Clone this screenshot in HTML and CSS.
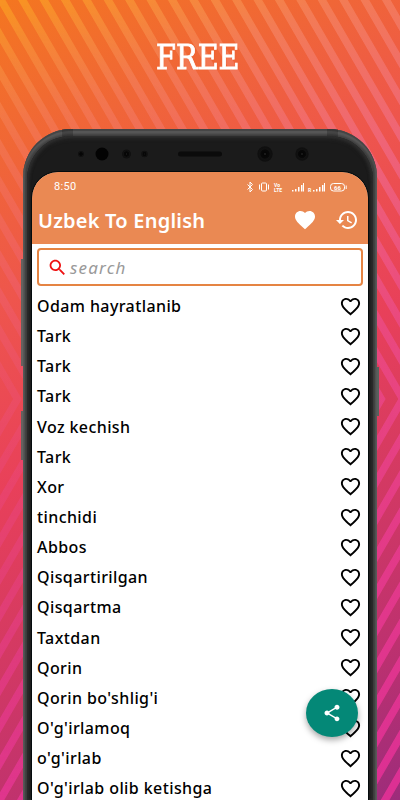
FILE: index.html
```html
<!DOCTYPE html>
<html lang="en">
<head>
  <meta charset="UTF-8">
  <title>Uzbek To English</title>
  <link rel="stylesheet" href="styles.css">
</head>
<body>
  <svg class="backdrop" viewBox="0 0 400 800">
    <defs>
      <linearGradient id="stripe-color" gradientUnits="userSpaceOnUse" x1="30" y1="0" x2="330" y2="800">
        <stop offset="0" stop-color="#f89524"/>
        <stop offset=".13" stop-color="#f37b55"/>
        <stop offset=".3" stop-color="#ef6476"/>
        <stop offset=".5" stop-color="#ea4a80"/>
        <stop offset=".75" stop-color="#e33a88"/>
        <stop offset="1" stop-color="#dc3093"/>
      </linearGradient>
      <radialGradient id="fade" gradientUnits="userSpaceOnUse" cx="0" cy="380" r="420">
        <stop offset="0" stop-opacity=".65"/>
        <stop offset=".5" stop-opacity=".45"/>
        <stop offset="1" stop-opacity="0"/>
      </radialGradient>
      <pattern id="down" width="21.4" height="400" patternUnits="userSpaceOnUse" patternTransform="translate(18.1 0) skewX(30)"><rect width="8.7" height="400" fill="#fff"/></pattern>
      <pattern id="up" width="21.4" height="400" patternUnits="userSpaceOnUse" patternTransform="translate(18.1 798) scale(1 -1) skewX(30)"><rect width="8.7" height="400" fill="#fff"/></pattern>
      <mask id="stripes"><rect width="400" height="399" fill="url(#down)"/><rect y="399" width="400" height="401" fill="url(#up)"/><rect width="400" height="800" fill="url(#fade)"/></mask>
    </defs>
    <rect width="400" height="800" fill="url(#stripe-color)" mask="url(#stripes)"/>
  </svg>
  <svg class="defs">
    <symbol id="heart" viewBox="0 0 24 24"><path d="M16.5 3c-1.74 0-3.41.81-4.5 2.09C10.91 3.81 9.24 3 7.5 3 4.42 3 2 5.42 2 8.5c0 3.78 3.4 6.86 8.55 11.54L12 21.35l1.45-1.32C18.6 15.36 22 12.28 22 8.5 22 5.42 19.58 3 16.5 3zm-4.4 15.55l-.1.1-.1-.1C7.14 14.24 4 11.39 4 8.5 4 6.5 5.5 5 7.5 5c1.54 0 3.04.99 3.57 2.36h1.87C13.46 5.99 14.96 5 16.5 5c2 0 3.5 1.5 3.5 3.5 0 2.89-3.14 5.74-7.9 10.05z"/></symbol>
  </svg>
  <h1 class="headline">FREE</h1>
  <div class="phone">
    <i class="side-btn volume"></i><i class="side-btn bixby"></i><i class="side-btn power"></i>
    <i class="seam"></i><i class="seam right"></i>
    <div class="bezel">
      <svg class="sensors" viewBox="0 0 340 36">
        <defs><radialGradient id="lens"><stop offset="0" stop-color="#2b2b2b"/><stop offset=".2" stop-color="#050505"/><stop offset=".55" stop-color="#080808"/><stop offset=".65" stop-color="#111"/><stop offset="1" stop-color="#0e0e0e"/></radialGradient></defs>
        <circle cx="51" cy="18" r="3" fill="url(#lens)"/>
        <circle cx="72" cy="18" r="6.5" fill="#030303"/>
        <circle cx="96.5" cy="18" r="4.5" fill="url(#lens)"/>
        <circle cx="114.5" cy="18" r="3.3" fill="url(#lens)"/>
        <rect x="148" y="15.5" width="44" height="5" rx="2.5" fill="#0b0b0b"/>
        <circle cx="235" cy="18" r="7.7" fill="url(#lens)"/>
        <circle cx="272" cy="18" r="6.7" fill="url(#lens)"/>
      </svg>
      <div class="screen">
        <header class="appbar">
          <div class="status">
            <span class="clock">8:50</span>
            <svg class="status-icons" viewBox="0 0 102 12" fill="none" stroke="#fff">
              <path d="M1.500 3.500l5 5L4 11V1l2.500 2.500-5 5"/>
              <rect x="15.500" y="2" width="5" height="8" rx="1"/><path d="M13.500 3.500v5M22.500 3.500v5"/>
              <path stroke="none" fill="#fff" d="M46 9h1.500v1.500H46zM49 8h1.500v2.500H49zM52 6h1.500v4.500H52zM55 4h1.500v6.500H55zM57 2h1v8.500h-1zM67 9h1.500v1.500H67zM70 8h1.500v2.500H70zM73 6h1.500v4.500H73zM76 4h1.500v6.500H76zM78 2h1v8.500h-1z"/>
              <rect x="84.500" y="2.500" width="14" height="7.500" rx="3"/><path d="M100.200 4.500v3.500"/>
              <g class="tiny"><text x="28" y="5.500">Vo</text><text x="28" y="10.600">LTE</text><text x="62" y="10.600">R</text><text class="level" x="88" y="8.600">66</text></g>
            </svg>
          </div>
          <div class="titlebar">
            <span class="title">Uzbek To English</span>
            <svg class="icon" viewBox="0 0 24 24"><path d="M12 21.350l-1.450-1.320C5.400 15.360 2 12.280 2 8.500 2 5.420 4.420 3 7.500 3c1.740 0 3.410.810 4.500 2.090C13.090 3.810 14.760 3 16.500 3 19.580 3 22 5.420 22 8.500c0 3.780-3.400 6.860-8.550 11.540L12 21.350z"/></svg>
            <svg class="icon" viewBox="0 0 24 24"><path d="M13 3c-4.970 0-9 4.030-9 9H1l3.890 3.890.070.140L9 12H6c0-3.870 3.130-7 7-7s7 3.130 7 7-3.130 7-7 7c-1.930 0-3.680-.790-4.940-2.060l-1.420 1.420C8.270 19.990 10.510 21 13 21c4.970 0 9-4.030 9-9s-4.030-9-9-9zm-1 5v5l4.280 2.540.720-1.210-3.500-2.080V8H12z"/></svg>
          </div>
        </header>
        <div class="search">
          <svg viewBox="0 0 24 24"><path d="M15.500 14h-.790l-.280-.270C15.410 12.590 16 11.110 16 9.500 16 5.910 13.090 3 9.500 3S3 5.910 3 9.500 5.910 16 9.500 16c1.610 0 3.090-.590 4.230-1.570l.270.280v.790l5 4.990L20.490 19l-4.990-5zm-6 0C7.010 14 5 11.990 5 9.500S7.010 5 9.500 5 14 7.010 14 9.500 11.990 14 9.500 14z"/></svg>
          <span>search</span>
        </div>
        <ul class="words">
          <li>Odam hayratlanib<svg><use href="#heart"/></svg></li>
          <li>Tark<svg><use href="#heart"/></svg></li>
          <li>Tark<svg><use href="#heart"/></svg></li>
          <li>Tark<svg><use href="#heart"/></svg></li>
          <li>Voz kechish<svg><use href="#heart"/></svg></li>
          <li>Tark<svg><use href="#heart"/></svg></li>
          <li>Xor<svg><use href="#heart"/></svg></li>
          <li>tinchidi<svg><use href="#heart"/></svg></li>
          <li>Abbos<svg><use href="#heart"/></svg></li>
          <li>Qisqartirilgan<svg><use href="#heart"/></svg></li>
          <li>Qisqartma<svg><use href="#heart"/></svg></li>
          <li>Taxtdan<svg><use href="#heart"/></svg></li>
          <li>Qorin<svg><use href="#heart"/></svg></li>
          <li>Qorin bo'shlig'i<svg><use href="#heart"/></svg></li>
          <li>O'g'irlamoq<svg><use href="#heart"/></svg></li>
          <li>o'g'irlab<svg><use href="#heart"/></svg></li>
          <li>O'g'irlab olib ketishga<svg><use href="#heart"/></svg></li>
        </ul>
        <div class="share">
          <svg viewBox="0 0 24 24"><path d="M18 16.080c-.760 0-1.440.300-1.960.770L8.910 12.700c.050-.230.090-.460.090-.700s-.040-.470-.090-.700l7.050-4.110c.540.500 1.250.810 2.040.810 1.660 0 3-1.340 3-3s-1.340-3-3-3-3 1.340-3 3c0 .240.040.470.090.700L8.040 9.810C7.500 9.310 6.790 9 6 9c-1.660 0-3 1.340-3 3s1.340 3 3 3c.790 0 1.500-.310 2.040-.810l7.120 4.160c-.050.210-.080.430-.080.650 0 1.610 1.310 2.920 2.920 2.920s2.920-1.310 2.920-2.920-1.310-2.920-2.920-2.920z"/></svg>
        </div>
      </div>
    </div>
  </div>
</body>
</html>
```

FILE: styles.css
```css
:root { --orange: #ea8953; --teal: #048877; --font: "Noto Sans", sans-serif; }
* { box-sizing: border-box; }
body { margin: 0; width: 400px; height: 800px; overflow: hidden; position: relative; font-family: var(--font); background: linear-gradient(155deg, #f47620 0%, #f06637 16%, #ee554d 31%, #e8405a 50%, #d83b60 63%, #bd316f 84%, #9c2c7b 100%); }
.backdrop { position: absolute; inset: 0; width: 400px; height: 800px; }
.defs { position: absolute; width: 0; height: 0; }
.headline { position: relative; margin: 0; height: 129px; padding-top: 38px; text-align: center; font: 400 33px/40px "DejaVu Serif", serif; color: #fff; text-indent: -5px; transform: scaleX(.87); -webkit-text-stroke: .9px #fff; text-shadow: 0 0 2px #e65018; }
.phone { position: relative; width: 354px; height: 671px; margin-left: 23px; padding: 7px 4px 0; border-radius: 48px 48px 0 0; background: linear-gradient(90deg, #5e6260 0, #3b3b3b 3px, #3b3b3b 351px, #606562 354px); box-shadow: inset 0 2px 1px #444, inset 0 5px 3px #5b5b5b; }
.bezel { height: 664px; padding: 0 5px; border-radius: 44px 44px 0 0; background: #1b1b1b; box-shadow: inset 0 2px 4px #303030, inset 2px 0 3px #292929, inset -2px 0 3px #292929; }
.sensors { display: block; width: 340px; height: 36px; margin-left: -2px; }
.side-btn { position: absolute; width: 2px; background: #66615f; left: -2px; }
.volume { top: 130px; height: 107px; }
.bixby { top: 282px; height: 49px; }
.power { left: 354px; top: 238px; height: 49px; background: #59605d; }
.seam { position: absolute; left: 39px; top: 0; width: 11px; height: 7px; background: rgba(0,0,0,.2); }
.seam.right { left: 304px; }
.screen { position: relative; height: 628px; border-radius: 26px 26px 0 0; background: #fff; outline: 1px solid #050b0d; }
.appbar { height: 72px; background: var(--orange); border-radius: 26px 26px 0 0; color: #fff; }
.status { display: flex; justify-content: space-between; align-items: center; height: 30px; padding: 0 20px 0 22px; }
.clock { font: 11px/14px Roboto, sans-serif; letter-spacing: .35px; }
.status-icons { width: 102px; height: 12px; }
.tiny { fill: #fff; stroke: none; font: bold 5px Roboto, sans-serif; }
.level { font-size: 6px; }
.titlebar { display: flex; align-items: center; height: 36px; padding: 0 9px 0 6px; }
.title { flex: 1; font-size: 20px; font-weight: 600; letter-spacing: .22px; white-space: nowrap; }
.icon { width: 24px; height: 24px; fill: #fff; margin-left: 18px; }
.search { display: flex; align-items: center; height: 38px; margin: 4px 5px 5px; border: 2px solid #e58443; border-radius: 4px; padding-left: 8px; color: #999; font-size: 17px; font-style: italic; letter-spacing: 1.2px; }
.search svg { width: 21px; height: 21px; fill: #ee1111; margin-right: 2px; }
.words { list-style: none; margin: 0; padding: 0; height: 508px; overflow: hidden; }
.words li { display: flex; justify-content: space-between; align-items: center; height: 30.15px; padding: 0 6px 0 5px; font-size: 16px; font-weight: 500; letter-spacing: .4px; color: #000; white-space: nowrap; }
.words svg { width: 23px; height: 23px; }
.share { position: absolute; left: 274px; top: 517px; width: 52px; height: 48px; border-radius: 50%; background: var(--teal); display: flex; align-items: center; justify-content: center; box-shadow: 0 3px 6px rgba(0,0,0,.35); }
.share svg { width: 20px; height: 20px; fill: #fff; }
```
